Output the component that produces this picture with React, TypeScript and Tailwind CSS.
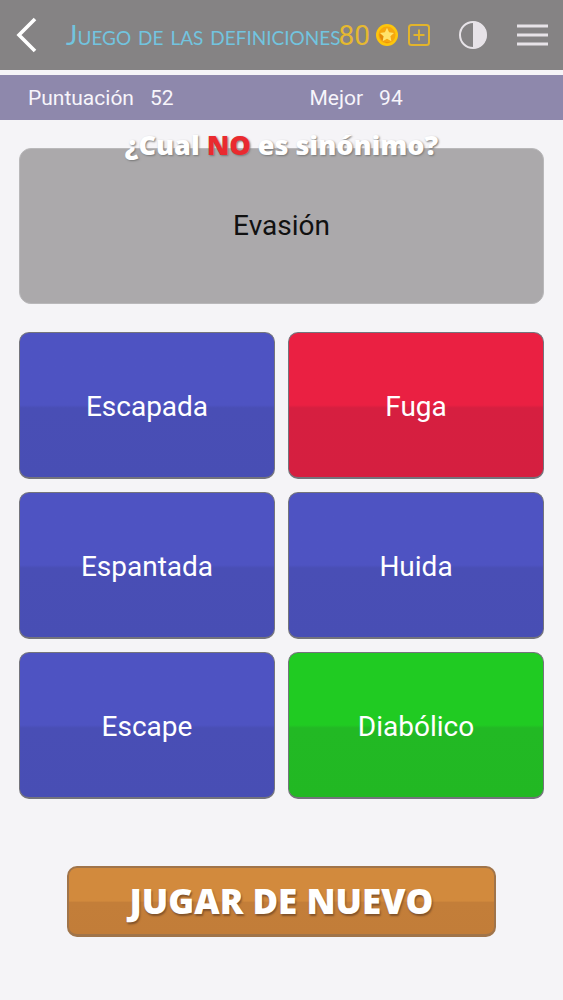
import { useState } from "react";

type TileProps = {
    word: string;
    color: string;
    onSelect: (word: string) => void;
}

type ScoreProps = {
    label: string;
    value: number;
}

const answers = [
    { word: "Escapada", color: "from-[#4e53c2] from-50% via-[#494eb5] via-52% to-[#484eb4]" },
    { word: "Fuga", color: "from-[#ea2042] from-50% via-[#d61f40] via-52% to-[#d51f40]" },
    { word: "Espantada", color: "from-[#4e53c2] from-50% via-[#494eb5] via-52% to-[#484eb4]" },
    { word: "Huida", color: "from-[#4e53c2] from-50% via-[#494eb5] via-52% to-[#484eb4]" },
    { word: "Escape", color: "from-[#4e53c2] from-50% via-[#494eb5] via-52% to-[#484eb4]" },
    { word: "Diabólico", color: "from-[#20cb22] from-50% via-[#22b924] via-52% to-[#22b823]" },
];

const CoinIcon = () => (
    <svg width="22" height="22" viewBox="0 0 22 22" aria-hidden="true">
        <circle cx="11" cy="11" r="11" fill="#fdc60b" />
        <circle cx="11" cy="11" r="8.5" fill="#f6a70f" />
        <path d="M3.5 9.5 L9 13 L7 17.5 L14 18.5 A8.5 8.5 0 0 1 3.5 9.5Z" fill="#e58a06" />
        <path d="M11 3.8 L13.1 8.3 L18 8.9 L14.4 12.3 L15.4 17.2 L11 14.8 L6.6 17.2 L7.6 12.3 L4 8.9 L8.9 8.3Z" fill="#ffe36a" />
    </svg>
)

const Score = ({ label, value }: ScoreProps) => (
    <p className="flex flex-1 gap-4 pl-7">
        <span>{label}</span>
        <span>{value}</span>
    </p>
)

const Tile = ({ word, color, onSelect }: TileProps) => {
    return (
        <button
            onClick={() => onSelect(word)}
            className={"h-[147px] rounded-[10px] border border-b-2 border-[#74747c] bg-linear-to-b pt-1 text-[28px] text-white " + color}
        >
            {word}
        </button>
    );
}

const Header = () => {
    return (
        <header className="flex h-[70px] items-center bg-[#858384] pr-3.5">
            <button aria-label="Volver" className="shrink-0 pl-4 pr-7">
                <svg width="22" height="36" viewBox="0 0 22 36" fill="none" stroke="#ffffff" strokeWidth="3.6" aria-hidden="true">
                    <path d="M19 2 L3 18 L19 34" />
                </svg>
            </button>
            <h1 className="w-0 flex-1 font-['Lato'] text-[27px] leading-8 whitespace-nowrap text-[#72c4df] [font-variant:small-caps]">
                Juego de las definiciones
            </h1>
            <div className="flex shrink-0 items-center gap-1.5">
                <span className="pt-0.5 text-[28px] text-[#e6b92f]">80</span>
                <CoinIcon />
                <button aria-label="Conseguir monedas" className="ml-1">
                    <svg width="22" height="22" viewBox="0 0 22 22" fill="none" stroke="#e2b42c" strokeWidth="2" aria-hidden="true">
                        <rect x="1" y="1" width="20" height="20" rx="2.5" />
                        <path d="M11 5.5 V16.5 M5.5 11 H16.5" />
                    </svg>
                </button>
            </div>
            <button aria-label="Contraste" className="ml-7 shrink-0">
                <svg width="30" height="30" viewBox="0 0 30 30" aria-hidden="true">
                    <circle cx="15" cy="15" r="13" fill="none" stroke="#e7e3e8" strokeWidth="2" />
                    <path d="M15 1.5 A13.5 13.5 0 0 1 15 28.5Z" fill="#e7e3e8" />
                </svg>
            </button>
            <button aria-label="Menú" className="ml-7 shrink-0">
                <svg width="33" height="24" viewBox="0 0 33 24" stroke="#e7e3e8" strokeWidth="3" aria-hidden="true">
                    <path d="M1 3 H32 M1 12 H32 M1 21 H32" />
                </svg>
            </button>
        </header>
    );
}

export default function App() {
    const [selected, setSelected] = useState("Fuga");

    return (
        <div className="min-h-screen bg-[#f5f4f7] font-['Roboto',sans-serif]">
            <Header />
            <div className="mt-[5px] flex h-[45px] items-center bg-[#8e88ac] pt-0.5 text-[21px] text-[#f7f5fb]">
                <Score label="Puntuación" value={52} />
                <Score label="Mejor" value={94} />
            </div>

            <main className="flex flex-col px-[19px] pt-7">
                <section className="relative flex h-[156px] items-center justify-center rounded-[12px] border border-[#b9b8ba] bg-[#aba9ab]">
                    <h2 className="absolute -top-1 w-full -translate-y-1/2 text-center font-['Open_Sans'] text-[27px] leading-8 font-extrabold text-white [text-shadow:1px_1px_2px_#777777]">
                        ¿Cual <span className="text-[#ea2a2f]">NO</span> es sinónimo?
                    </h2>
                    <p className="text-[28px] text-[#111111]">Evasión</p>
                </section>

                <div className="mt-7 grid grid-cols-2 gap-[13px]">
                    {answers.map((answer) => (
                        <Tile key={answer.word} word={answer.word} color={answer.color} onSelect={setSelected} />
                    ))}
                </div>

                <button
                    onClick={() => setSelected("")}
                    disabled={selected === ""}
                    className="mx-12 mt-[67px] h-[71px] rounded-[10px] border-2 border-b-3 border-[#a0744a] bg-linear-to-b from-[#d28a3d] from-50% via-[#c37e39] via-52% to-[#c27d39] font-['Open_Sans'] text-[35px] font-extrabold text-white [text-shadow:1px_2px_2px_#80522a]"
                >
                    JUGAR DE NUEVO
                </button>
            </main>
        </div>
    );
}
